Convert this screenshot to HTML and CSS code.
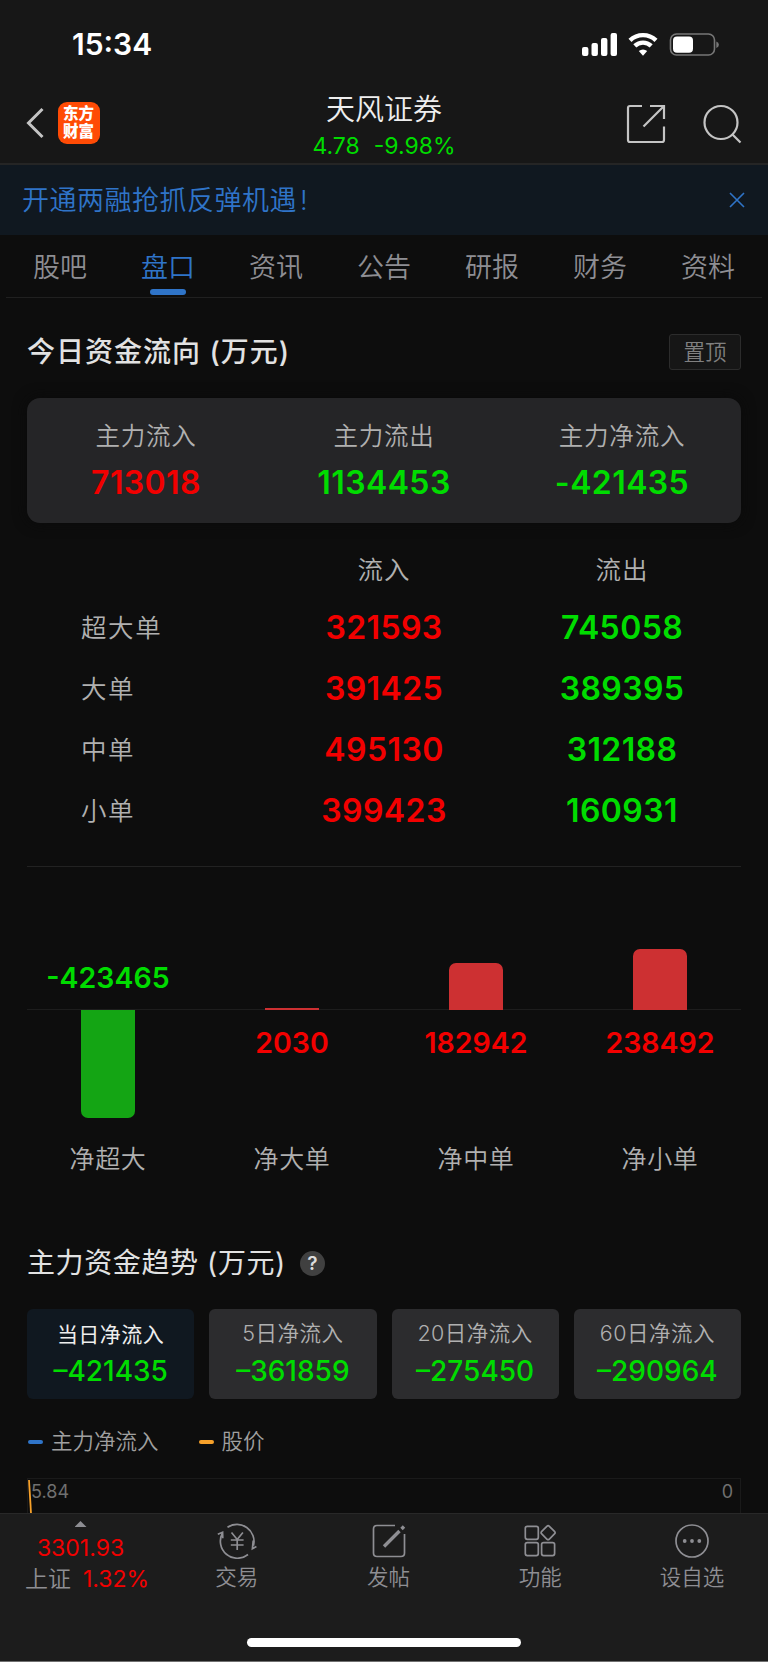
FILE: index.html
```html
<!DOCTYPE html>
<html lang="zh-CN">
<head>
    <meta charset="UTF-8">
    <title>天风证券</title>
    <link rel="stylesheet" href="styles.css">
</head>
<body>
    <!-- status bar + title -->
    <div class="top">
        <div class="status">
            <span class="time">15:34</span>
            <svg class="status-icons" width="140" height="26" viewBox="0 0 140 26">
                <g fill="#fff">
                    <rect x="2" y="16" width="6.4" height="9" rx="2"/>
                    <rect x="11.5" y="12" width="6.4" height="13" rx="2"/>
                    <rect x="21" y="7" width="6.4" height="18" rx="2"/>
                    <rect x="30.6" y="2" width="6.4" height="23" rx="2"/>
                    <path d="M58.800 20.100a6.300 6.300 0 0 1 8.400 0l-4.200 4.600z"/>
                </g>
                <path d="M50 9.300a19 19 0 0 1 26 0M54.800 14.900a12 12 0 0 1 16.400 0" fill="none" stroke="#fff" stroke-width="4.400"/>
                <rect x="90.500" y="3" width="44" height="21" rx="6" fill="none" stroke="#777" stroke-width="1.600"/>
                <rect x="93" y="5.400" width="20" height="16.400" rx="4" fill="#fff"/>
                <path d="M136.300 10.500q2.600 1 2.600 3.200t-2.600 3.200z" fill="#777"/>
            </svg>
        </div>
        <div class="nav">
            <div class="nav-left">
                <svg width="20" height="34" viewBox="0 0 20 34"><path d="M16.500 3L2.500 17l14 14" fill="none" stroke="#c4c4c4" stroke-width="3"/></svg>
                <div class="logo"><span>东方</span><span>财富</span></div>
            </div>
            <div class="nav-title">
                <h1>天风证券</h1>
                <p class="down"><span>4.78</span><span>-9.98%</span></p>
            </div>
            <div class="nav-right">
                <svg width="40" height="40" viewBox="0 0 40 40" fill="none" stroke="#c4c4c4" stroke-width="2.200">
                    <path d="M16 2H4Q2 2 2 4v32q0 2 2 2h32q2 0 2-2V22.500M24 2h14v13M38 2L17.500 22.500"/>
                </svg>
                <svg width="40" height="40" viewBox="0 0 40 40" fill="none" stroke="#c4c4c4" stroke-width="2.200">
                    <circle cx="19" cy="18.500" r="16.500"/><path d="M30 30l8.500 8.500"/>
                </svg>
            </div>
        </div>
    </div>

    <div class="banner">
        <p>开通两融抢抓反弹机遇<span>!</span></p>
        <svg width="16" height="16" viewBox="0 0 16 16"><path d="M1 1l14 14M15 1L1 15" stroke="#2f74c8" stroke-width="1.600"/></svg>
    </div>

    <div class="tabs">
        <a>股吧</a>
        <a class="active">盘口</a>
        <a>资讯</a>
        <a>公告</a>
        <a>研报</a>
        <a>财务</a>
        <a>资料</a>
    </div>

    <div class="main">
        <div class="section-head">
            <h2>今日资金流向 (万元)</h2>
            <button class="pin">置顶</button>
        </div>

        <div class="summary">
            <div><p>主力流入</p><b class="up">713018</b></div>
            <div><p>主力流出</p><b class="down">1134453</b></div>
            <div><p>主力净流入</p><b class="down">-421435</b></div>
        </div>

        <div class="orders">
            <div class="row head"><span></span><span>流入</span><span>流出</span></div>
            <div class="row"><span>超大单</span><b class="up">321593</b><b class="down">745058</b></div>
            <div class="row"><span>大单</span><b class="up">391425</b><b class="down">389395</b></div>
            <div class="row"><span>中单</span><b class="up">495130</b><b class="down">312188</b></div>
            <div class="row"><span>小单</span><b class="up">399423</b><b class="down">160931</b></div>
        </div>

        <!-- net inflow bars, heights follow the values -->
        <div class="bars">
            <div class="col">
                <div class="above"><b class="down">-423465</b></div>
                <div class="below"><i class="bar neg" style="height:108px"></i></div>
                <p>净超大</p>
            </div>
            <div class="col">
                <div class="above"><i class="bar pos flat" style="height:2px"></i></div>
                <div class="below"><b class="up">2030</b></div>
                <p>净大单</p>
            </div>
            <div class="col">
                <div class="above"><i class="bar pos" style="height:47px"></i></div>
                <div class="below"><b class="up">182942</b></div>
                <p>净中单</p>
            </div>
            <div class="col">
                <div class="above"><i class="bar pos" style="height:61px"></i></div>
                <div class="below"><b class="up">238492</b></div>
                <p>净小单</p>
            </div>
        </div>

        <div class="trend-head">
            <h2>主力资金趋势 (万元)</h2>
            <span class="help">?</span>
        </div>

        <div class="periods">
            <div class="period active"><p>当日净流入</p><b>–421435</b></div>
            <div class="period"><p>5日净流入</p><b>–361859</b></div>
            <div class="period"><p>20日净流入</p><b>–275450</b></div>
            <div class="period"><p>60日净流入</p><b>–290964</b></div>
        </div>

        <div class="legend">
            <span class="key blue">主力净流入</span>
            <span class="key orange">股价</span>
        </div>

        <div class="chart">
            <svg width="6" height="34" viewBox="0 0 6 34"><path d="M1 1L3 34" stroke="#f7a12a" stroke-width="1.800"/></svg>
            <span class="max">5.84</span>
            <span>0</span>
        </div>
    </div>

    <div class="toolbar">
        <div class="index">
            <i class="arrow"></i>
            <span class="up">3301.93</span>
            <p><span>上证</span><span class="up">1.32%</span></p>
        </div>
        <div class="tool">
            <svg width="40" height="36" viewBox="0 0 40 36" fill="none" stroke="#8e8e93" stroke-width="1.700">
                <path d="M10.500 4.300A17 17 0 0 1 36.500 22.500M36.200 17.500l-.8 8.300 4-2.300M31 31.500A17 17 0 0 1 5.500 10M.8 11.200l4.800-1.900.2 6"/>
                <path d="M14.500 9.500l5.700 7 5.700-7M20.200 16.500V27M13.800 17h12.800M13.800 22h12.800"/>
            </svg>
            <span>交易</span>
        </div>
        <div class="tool">
            <svg width="36" height="36" viewBox="0 0 36 36" fill="none" stroke="#8e8e93" stroke-width="1.700">
                <path d="M24 2.500H6Q2.500 2.500 2.500 6v24q0 3.500 3.500 3.500h24q3.500 0 3.500-3.500V11"/>
                <path d="M13 23.500L28.500 8M30.500 6l2.500-2.500" stroke-width="3.400"/>
            </svg>
            <span>发帖</span>
        </div>
        <div class="tool">
            <svg width="36" height="36" viewBox="0 0 36 36" fill="none" stroke="#8e8e93" stroke-width="1.700">
                <rect x="3.300" y="3.300" width="13" height="13" rx="2"/>
                <rect x="3.300" y="19.600" width="13" height="13" rx="2"/>
                <rect x="19.600" y="19.600" width="13" height="13" rx="2"/>
                <rect x="20.700" y="4.300" width="10.800" height="10.800" rx="1.800" transform="rotate(45 26.100 9.700)"/>
            </svg>
            <span>功能</span>
        </div>
        <div class="tool">
            <svg width="36" height="36" viewBox="0 0 36 36">
                <circle cx="18" cy="18" r="16" fill="none" stroke="#8e8e93" stroke-width="1.700"/>
                <g fill="#8e8e93"><circle cx="10.700" cy="18" r="1.900"/><circle cx="18" cy="18" r="1.900"/><circle cx="25.300" cy="18" r="1.900"/></g>
            </svg>
            <span>设自选</span>
        </div>
        <div class="home"></div>
    </div>
</body>
</html>
```

FILE: styles.css
```css
* {
  box-sizing: border-box;
}

body {
  margin: 0;
  width: 768px;
  height: 1662px;
  overflow: hidden;
  background: #0d0d0d;
  color: #b0b0b0;
  font-family: Inter, "Noto Sans CJK SC", sans-serif;
  font-weight: 350;
  line-height: 1;
  display: flex;
  flex-direction: column;
}

h1, h2, p {
  margin: 0;
}

b {
  font-weight: 560;
}

svg {
  display: block;
  flex: none;
}

.up {
  color: #f20000;
}

.down {
  color: #00dc00;
}

/* ---- header ---- */
.top {
  height: 165px;
  background: #171717;
  border-bottom: 2px solid #252525;
}

.status {
  height: 88px;
  padding: 0 48px 0 72px;
  display: flex;
  align-items: center;
  justify-content: space-between;
}

.time {
  color: #fff;
  font-size: 30px;
  font-weight: 600;
}

.nav {
  height: 75px;
  padding: 0 26px;
  display: grid;
  grid-template-columns: 1fr auto 1fr;
}

.nav-left {
  display: flex;
  align-items: center;
  gap: 11.5px;
  padding-bottom: 5px;
}

.logo {
  width: 42px;
  height: 42px;
  border-radius: 9px;
  background: #ff4b05;
  color: #fff;
  font-size: 15.5px;
  font-weight: 900;
  line-height: 18px;
  display: flex;
  flex-direction: column;
  align-items: center;
  justify-content: center;
}

.nav-title {
  display: flex;
  flex-direction: column;
  align-items: center;
  padding-top: 7px;
}

.nav-title h1 {
  color: #eee;
  font-size: 29px;
  font-weight: 350;
  line-height: 30px;
}

.nav-title p {
  display: flex;
  gap: 14px;
  font-size: 23px;
  font-weight: 400;
  line-height: 24px;
  margin-top: 9px;
}

.nav-right {
  display: flex;
  justify-content: flex-end;
  align-items: center;
  gap: 36px;
  padding-bottom: 3px;
}

.banner {
  height: 70px;
  padding: 0 23px 0 22px;
  display: flex;
  align-items: center;
  justify-content: space-between;
  background: #101820;
  color: #2f74c8;
  font-size: 27px;
  letter-spacing: 0.5px;
}

.banner span {
  margin-left: 3px;
}

.tabs {
  height: 63px;
  margin: 0 6px;
  border-bottom: 1px solid #202020;
  display: grid;
  grid-template-columns: repeat(7, 108px);
  justify-items: center;
  color: #8e8e93;
  font-size: 27px;
}

.tabs a {
  display: flex;
  flex-direction: column;
  align-items: center;
  line-height: 65px;
}

.tabs .active {
  color: #2f74c8;
}

.tabs .active::after {
  content: "";
  width: 36px;
  height: 6px;
  margin-top: -11px;
  border-radius: 3px;
  background: #2f74c8;
}

/* ---- content ---- */
.main {
  height: 1215px;
  padding: 0 27px;
}

.section-head {
  height: 100px;
  padding-top: 7px;
  display: flex;
  align-items: center;
  justify-content: space-between;
}

h2 {
  color: #e2e2e2;
  font-size: 28px;
  font-weight: 500;
  letter-spacing: 1px;
}

.pin {
  width: 72px;
  height: 36px;
  padding: 0;
  border: 1px solid #2c2c2c;
  border-radius: 3px;
  background: #161616;
  color: #808080;
  font: inherit;
  font-size: 21.5px;
  line-height: 34px;
}

.summary {
  height: 125px;
  border-radius: 13px;
  background: #252527;
  display: grid;
  grid-template-columns: repeat(3, 1fr);
  text-align: center;
  box-shadow: 0 0 14px #0a0a0a;
}

.summary p {
  font-size: 24.5px;
  letter-spacing: 0.8px;
  line-height: 30px;
  margin: 23px 0 16px;
}

.summary b, .orders b {
  display: block;
  font-size: 32px;
  line-height: 32px;
  letter-spacing: 0.4px;
}

.orders {
  height: 344px;
  padding-top: 17px;
  border-bottom: 1px solid #222;
}

.row {
  height: 61px;
  display: grid;
  grid-template-columns: repeat(3, 1fr);
  align-items: center;
  text-align: center;
  font-size: 25.5px;
  letter-spacing: 1px;
}

.row.head {
  height: 57px;
  padding-top: 2px;
}

.row span:first-child {
  text-align: left;
  padding-left: 54px;
  letter-spacing: 1.6px;
}

.bars {
  position: relative;
  height: 324px;
  margin: 0 -12px;
  display: grid;
  grid-template-columns: repeat(4, 184px);
  justify-content: center;
}

/* zero line */
.bars::before {
  content: "";
  position: absolute;
  left: 12px;
  right: 12px;
  top: 142px;
  height: 1px;
  background: #1d1d1d;
}

.col {
  position: relative;
  text-align: center;
}

.col p {
  font-size: 25px;
  letter-spacing: 0.6px;
  line-height: 30px;
}

.col b {
  font-size: 28.5px;
  line-height: 30px;
}

.above {
  height: 143px;
  display: flex;
  flex-direction: column;
  align-items: center;
  justify-content: flex-end;
}

.above b {
  margin-bottom: 17px;
}

.below {
  height: 134px;
  display: flex;
  flex-direction: column;
  align-items: center;
}

.below b {
  margin-top: 18px;
}

.bar {
  width: 54px;
}

.bar.pos {
  background: #cd3032;
  border-radius: 7px 7px 0 0;
}

.bar.neg {
  background: #14a514;
  border-radius: 0 0 7px 7px;
}

.bar.flat {
  border-radius: 0;
}

.trend-head {
  height: 118px;
  padding-top: 26px;
  display: flex;
  align-items: center;
  gap: 14px;
}

.trend-head h2 {
  font-weight: 400;
  letter-spacing: 0.6px;
}

.help {
  width: 25px;
  height: 25px;
  border-radius: 50%;
  background: #404040;
  color: #ddd;
  font-size: 19px;
  font-weight: 600;
  line-height: 25px;
  text-align: center;
}

.periods {
  display: grid;
  grid-template-columns: repeat(4, 1fr);
  gap: 15px;
}

.period {
  height: 90px;
  padding-top: 12px;
  border-radius: 6px;
  background: #2c2c2e;
  text-align: center;
}

.period p {
  font-size: 21.5px;
  letter-spacing: 0.5px;
  line-height: 24px;
}

.period b {
  display: block;
  margin-top: 11px;
  color: #00dc00;
  font-size: 28px;
  font-weight: 450;
  line-height: 30px;
}

.period.active {
  padding-top: 14px;
  background: #101820;
}

.period.active p {
  color: #eee;
  font-size: 21px;
  font-weight: 400;
}

.period.active b {
  margin-top: 9px;
}

.legend {
  height: 79px;
  padding: 7px 0 0 1px;
  display: flex;
  align-items: center;
  gap: 40px;
  font-size: 21.5px;
  color: #a0a0a0;
}

.key {
  display: flex;
  align-items: center;
  gap: 8px;
}

.key::before {
  content: "";
  width: 15px;
  height: 4px;
  border-radius: 2px;
}

.blue::before {
  background: #2f74c8;
}

.orange::before {
  background: #f7a12a;
}

.chart {
  height: 40px;
  padding-right: 7px;
  border: 1px solid #1a1a1a;
  display: flex;
  font-size: 18px;
  font-weight: 400;
  line-height: 26px;
  color: #707070;
}

.chart .max {
  flex: 1;
  margin-left: -3px;
}

/* ---- bottom toolbar ---- */
.toolbar {
  position: relative;
  height: 149px;
  background: #1c1c1c;
  border-top: 1px solid #282828;
  border-bottom: 1px solid #707070;
  color: #8e8e93;
  display: grid;
  grid-template-columns: 161px repeat(4, 1fr);
}

.index {
  display: flex;
  flex-direction: column;
  align-items: center;
  font-size: 23px;
  font-weight: 400;
}

.arrow {
  width: 12px;
  height: 6px;
  margin: 7px 0 9px;
  background: #8e8e93;
  clip-path: polygon(50% 0, 100% 100%, 0 100%);
}

.index > span {
  line-height: 24px;
}

.index p {
  display: flex;
  align-items: center;
  gap: 12px;
  margin: 7px 0 0 13px;
  line-height: 24px;
}

.index p span:first-child {
  font-weight: 350;
}

.tool {
  display: flex;
  flex-direction: column;
  align-items: center;
  padding-top: 9px;
  font-size: 21.5px;
}

.tool span {
  margin-top: 6px;
  line-height: 24px;
}

.home {
  position: absolute;
  left: 247px;
  bottom: 14px;
  width: 274px;
  height: 9px;
  border-radius: 5px;
  background: #fff;
}
```
